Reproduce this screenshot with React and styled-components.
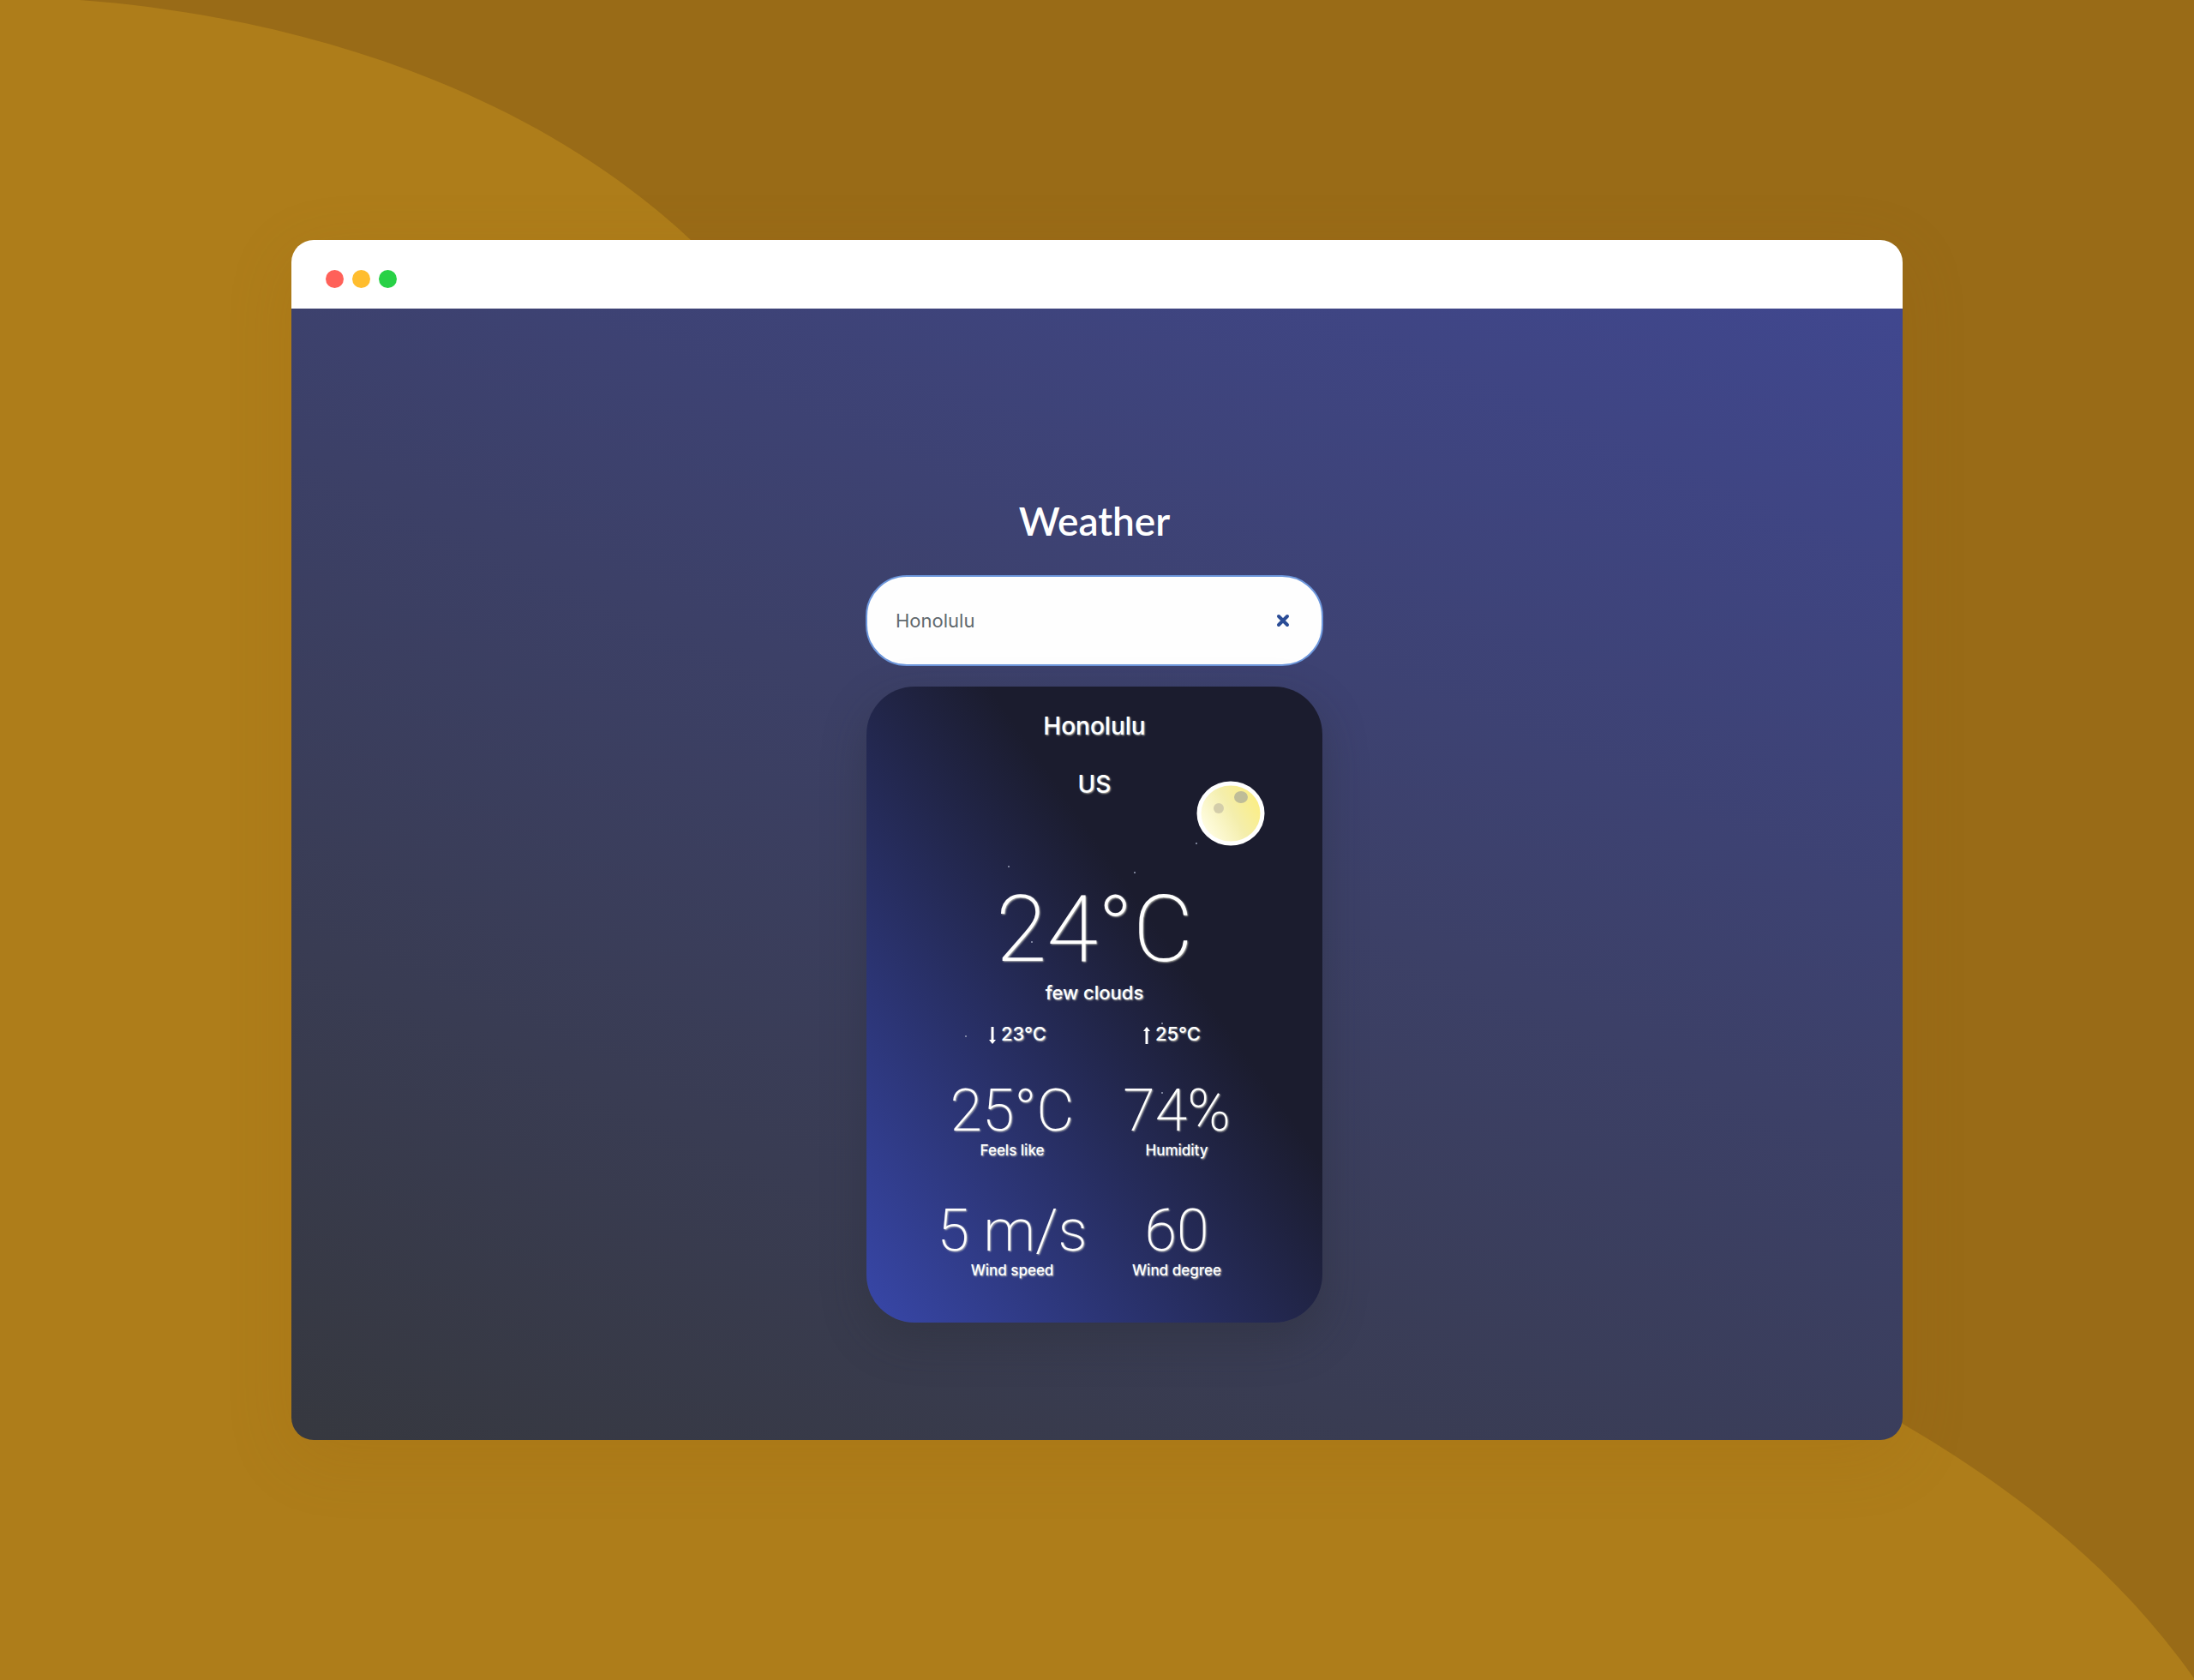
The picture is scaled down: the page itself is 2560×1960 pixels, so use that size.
import React, { useState } from "react";
import styled, { createGlobalStyle } from "styled-components";

const GlobalStyle = createGlobalStyle`
  *, *::before, *::after { box-sizing: border-box; }
  body { margin: 0; font-family: Inter, "Liberation Sans", sans-serif; }
  h1, h2, p, dl, dd { margin: 0; font-weight: inherit; }
`;

const Page = styled.div`
  display: grid;
  min-height: 100vh;
  background: #996b17;
`;

const Backdrop = styled.svg`
  grid-area: 1 / 1;
  width: 100%;
  height: 100%;
`;

const Stage = styled.div`
  grid-area: 1 / 1;
  display: flex;
  padding: 280px 340px;
`;

const Browser = styled.section`
  flex: 1;
  display: flex;
  flex-direction: column;
  border-radius: 26px;
  overflow: hidden;
  box-shadow: 0 20px 80px rgba(150, 90, 0, 0.14);
`;

const TitleBar = styled.header`
  display: flex;
  align-items: center;
  gap: 10px;
  height: 80px;
  padding: 10px 40px 0;
  background: #ffffff;
`;

const Dot = styled.span`
  width: 21px;
  height: 21px;
  border-radius: 50%;
  background: ${(p) => p.$color};
`;

const Screen = styled.main`
  flex: 1;
  display: flex;
  flex-direction: column;
  align-items: center;
  padding: 220px 6px 0 0;
  background: linear-gradient(24deg, #36383f 0%, #3c4067 54%, #40478f 100%);
`;

const Title = styled.h1`
  font: 600 46px/56px Lato, sans-serif;
  color: #ffffff;
`;

const Search = styled.form`
  display: flex;
  align-items: center;
  width: 534px;
  height: 106px;
  margin: 35px 0 24px;
  padding: 0 33px;
  border: 2px solid #6d97dc;
  border-radius: 48px;
  background: #fefefe;
`;

const CityInput = styled.input`
  flex: 1;
  min-width: 0;
  padding: 0;
  border: 0;
  outline: 0;
  background: transparent;
  color: #61696e;
  font: 400 22px/32px Inter, sans-serif;
`;

const ClearButton = styled.button`
  display: flex;
  padding: 4px;
  border: 0;
  background: transparent;
  color: #2a4c96;
`;

const Card = styled.article`
  position: relative;
  display: flex;
  flex-direction: column;
  align-items: center;
  width: 532px;
  padding: 26px 0 49px;
  border-radius: 56px;
  background: linear-gradient(55deg, #3847a9 0%, #1b1c2e 63%);
  box-shadow: 0 20px 50px rgba(40, 42, 50, 0.35);
  color: #ffffff;
  text-shadow: 1px 1px 2px rgba(220, 220, 205, 0.8);
`;

const Sky = styled.svg`
  position: absolute;
  inset: 0;
  width: 100%;
  height: 100%;
`;

const Place = styled.h2`
  margin-bottom: 28px;
  font-size: 28px;
  font-weight: 500;
  line-height: 40px;
`;

const Temperature = styled.p`
  margin: 67px 0 4px;
  font: 200 108px/108px Roboto, sans-serif;
`;

const Condition = styled.p`
  font-size: 22px;
  font-weight: 500;
  line-height: 32px;
`;

const Range = styled.div`
  display: grid;
  grid-template-columns: 180px 180px;
  margin: 16px 0 40px;
  font-size: 22px;
  font-weight: 500;
  line-height: 32px;
`;

const Extreme = styled.span`
  display: flex;
  align-items: center;
  justify-content: center;
  gap: 5px;
`;

const Stats = styled.dl`
  display: grid;
  grid-template-columns: 192px 192px;
  row-gap: 48px;
  text-align: center;
`;

const Stat = styled.div`
  display: flex;
  flex-direction: column-reverse;
`;

const StatLabel = styled.dt`
  font-size: 17px;
  font-weight: 500;
  line-height: 24px;
`;

const StatValue = styled.dd`
  font: 200 68px/68px Roboto, sans-serif;
`;

const stars = [
  [385, 183], [166, 210], [313, 217], [116, 408], [193, 298], [345, 393], [345, 474],
];

const stats = [
  ["Feels like", "25°C"],
  ["Humidity", "74%"],
  ["Wind speed", "5 m/s"],
  ["Wind degree", "60"],
];

function Arrow({ up }) {
  return (
    <svg width="10" height="24" viewBox="0 0 10 24" aria-hidden="true">
      <g transform={up ? undefined : "rotate(180 5 14)"}>
        <path d="M5 24V8" stroke="#fff" strokeWidth="3" />
        <path d="M1 9L5 4L9 9Z" fill="#fff" />
      </g>
    </svg>
  );
}

function NightSky() {
  return (
    <Sky viewBox="0 0 532 742" aria-hidden="true">
      <defs>
        <linearGradient id="moon" x1="0.1" y1="0.8" x2="0.95" y2="0.35">
          <stop offset="0" stopColor="#fffde2" />
          <stop offset="0.55" stopColor="#f4eeac" />
          <stop offset="1" stopColor="#fbee86" />
        </linearGradient>
      </defs>
      {stars.map(([x, y]) => (
        <circle key={`${x}-${y}`} cx={x} cy={y} r="1" fill="#9aa0b8" />
      ))}
      <ellipse cx="425" cy="148" rx="37" ry="35" fill="url(#moon)" stroke="#fff" strokeWidth="5" />
      <ellipse cx="437" cy="129" rx="8" ry="7" fill="#bfbd98" />
      <ellipse cx="411" cy="142" rx="6" ry="6" fill="#d3cdaa" />
    </Sky>
  );
}

export default function App() {
  const [city, setCity] = useState("Honolulu");
  return (
    <Page>
      <GlobalStyle />
      <Backdrop viewBox="0 0 2560 1960" preserveAspectRatio="none" aria-hidden="true">
        <path
          d="M0 0H93C360 20 625 110 806 280L2220 1661C2350 1737 2470 1830 2560 1958V1960H0Z"
          fill="#ae7d1a"
        />
      </Backdrop>
      <Stage>
        <Browser>
          <TitleBar>
            <Dot $color="#ff6159" />
            <Dot $color="#ffbd2e" />
            <Dot $color="#28d146" />
          </TitleBar>
          <Screen>
            <Title>Weather</Title>
            <Search onSubmit={(e) => e.preventDefault()}>
              <CityInput
                aria-label="City"
                value={city}
                onChange={(e) => setCity(e.target.value)}
              />
              <ClearButton type="button" aria-label="Clear" onClick={() => setCity("")}>
                <svg width="16" height="16" viewBox="0 0 16 16" aria-hidden="true">
                  <path
                    d="M3 3L13 13M13 3L3 13"
                    stroke="currentColor"
                    strokeWidth="4"
                    strokeLinecap="round"
                  />
                </svg>
              </ClearButton>
            </Search>
            <Card>
              <NightSky />
              <Place>Honolulu</Place>
              <Place>US</Place>
              <Temperature>24°C</Temperature>
              <Condition>few clouds</Condition>
              <Range>
                <Extreme><Arrow />23°C</Extreme>
                <Extreme><Arrow up />25°C</Extreme>
              </Range>
              <Stats>
                {stats.map(([label, value]) => (
                  <Stat key={label}>
                    <StatLabel>{label}</StatLabel>
                    <StatValue>{value}</StatValue>
                  </Stat>
                ))}
              </Stats>
            </Card>
          </Screen>
        </Browser>
      </Stage>
    </Page>
  );
}
